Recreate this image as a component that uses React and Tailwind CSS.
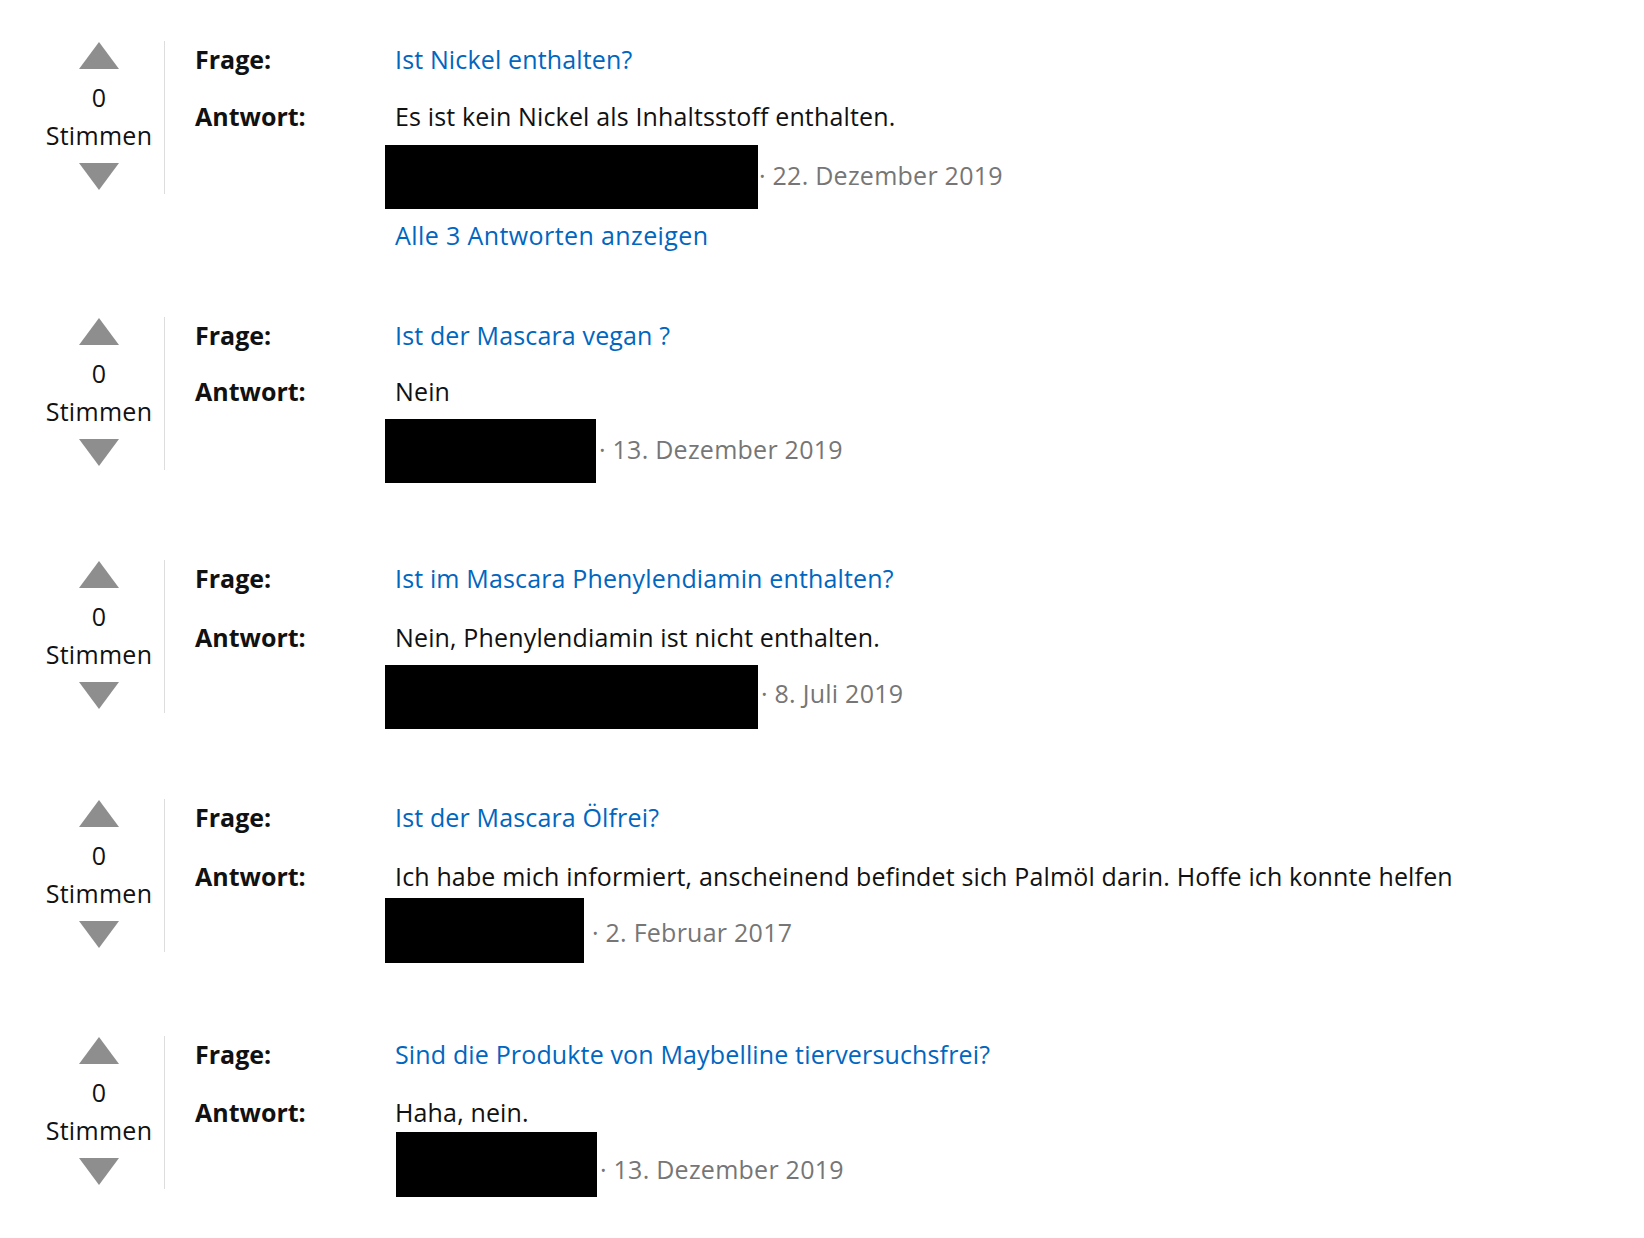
import React from "react";

function UpArrow() {
  return (
    <svg width="40" height="27" viewBox="0 0 40 27" className="block">
      <polygon points="20,0 40,27 0,27" fill="#8e8e8e" />
    </svg>
  );
}

function DownArrow() {
  return (
    <svg width="40" height="27" viewBox="0 0 40 27" className="block">
      <polygon points="0,0 40,0 20,27" fill="#8e8e8e" />
    </svg>
  );
}

function Vote() {
  return (
    <div className="w-[131px] shrink-0 border-r border-[#dddddd] flex flex-col items-center pt-[1px] pb-[4px] text-[25px] tracking-[0.3px] text-[#111111]">
      <UpArrow />
      <div className="mt-[9px] leading-[38px]">0</div>
      <div className="leading-[38px]">Stimmen</div>
      <div className="mt-[9px]">
        <DownArrow />
      </div>
    </div>
  );
}

const rows = [
  {
    h: "h-[276px]",
    qmt: "mt-[2px]",
    amt: "mt-[25px]",
    bmt: "mt-[13px]",
    q: "Ist Nickel enthalten?",
    a: "Es ist kein Nickel als Inhaltsstoff enthalten.",
    boxCls: "ml-[-10px] w-[373px] h-[64px]",
    dateCls: "ml-[1px] mt-[14px]",
    date: "22. Dezember 2019",
    link: true,
  },
  {
    h: "h-[243px]",
    qmt: "mt-[2px]",
    amt: "mt-[24px]",
    bmt: "mt-[12px]",
    q: "Ist der Mascara vegan ?",
    a: "Nein",
    boxCls: "ml-[-10px] w-[211px] h-[64px]",
    dateCls: "ml-[3px] mt-[14px]",
    date: "13. Dezember 2019",
  },
  {
    h: "h-[239px]",
    qmt: "mt-[2px]",
    amt: "mt-[27px]",
    bmt: "mt-[12px]",
    q: "Ist im Mascara Phenylendiamin enthalten?",
    a: "Nein, Phenylendiamin ist nicht enthalten.",
    boxCls: "ml-[-10px] w-[373px] h-[64px]",
    dateCls: "ml-[3px] mt-[12px]",
    date: "8. Juli 2019",
  },
  {
    h: "h-[237px]",
    qmt: "mt-[2px]",
    amt: "mt-[27px]",
    bmt: "mt-[6px]",
    q: "Ist der Mascara Ölfrei?",
    a: "Ich habe mich informiert, anscheinend befindet sich Palmöl darin. Hoffe ich konnte helfen",
    boxCls: "ml-[-10px] w-[199px] h-[65px]",
    dateCls: "ml-[8px] mt-[18px]",
    date: "2. Februar 2017",
  },
  {
    h: "h-[202px]",
    qmt: "mt-[2px]",
    amt: "mt-[26px]",
    bmt: "mt-[4px]",
    q: "Sind die Produkte von Maybelline tierversuchsfrei?",
    a: "Haha, nein.",
    boxCls: "ml-[1px] w-[201px] h-[65px]",
    dateCls: "ml-[3px] mt-[21px]",
    date: "13. Dezember 2019",
  },
];

function Row({ r }) {
  return (
    <div className={`flex items-start ${r.h}`}>
      <Vote />
      <div className="pl-[30px] flex flex-col text-[25px] tracking-[0.15px] leading-[32px] text-[#111111]">
        <div className={`flex ${r.qmt}`}>
          <div className="w-[200px] shrink-0 font-bold tracking-normal">Frage:</div>
          <div className="text-[#0066c0] whitespace-nowrap">{r.q}</div>
        </div>
        <div className={`flex ${r.amt}`}>
          <div className="w-[200px] shrink-0 font-bold tracking-normal">Antwort:</div>
          <div className="whitespace-nowrap">{r.a}</div>
        </div>
        <div className={`flex ${r.bmt}`}>
          <div className="w-[200px] shrink-0"></div>
          <div className="flex items-start">
            <div className={`bg-black shrink-0 ${r.boxCls}`}></div>
            <div className={`text-[#767676] whitespace-nowrap tracking-[0.25px] ${r.dateCls}`}>
              {"\u00b7 "}
              {r.date}
            </div>
          </div>
        </div>
        {r.link && (
          <div className="flex mt-[10px]">
            <div className="w-[200px] shrink-0"></div>
            <div className="text-[#0066c0] whitespace-nowrap tracking-[0.4px]">Alle 3 Antworten anzeigen</div>
          </div>
        )}
      </div>
    </div>
  );
}

export default function App() {
  return (
    <div className="w-[1644px] h-[1238px] bg-white overflow-hidden pt-[41px] pl-[34px] font-['Open_Sans',sans-serif]">
      {rows.map((r, i) => (
        <Row key={i} r={r} />
      ))}
    </div>
  );
}
